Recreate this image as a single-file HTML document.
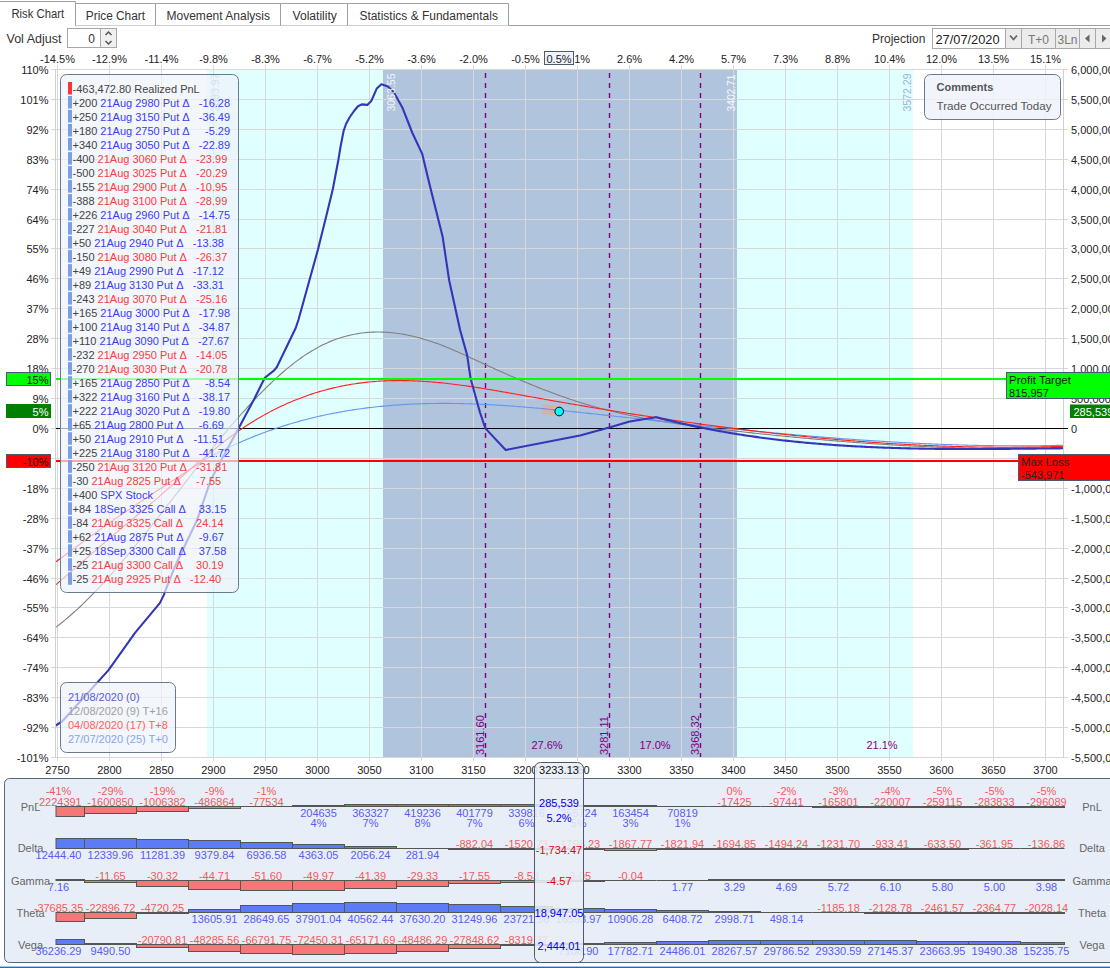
<!DOCTYPE html><html><head><meta charset="utf-8"><style>html,body{margin:0;padding:0;background:#fff;overflow:hidden}svg{display:block}text{font-family:"Liberation Sans",sans-serif}</style></head><body>
<svg width="1110" height="968" viewBox="0 0 1110 968">
<defs>
<clipPath id="plot"><rect x="56" y="69" width="1007" height="689"/></clipPath>
<clipPath id="above"><rect x="56" y="69" width="1007" height="392"/></clipPath>
<clipPath id="below"><rect x="56" y="461" width="1007" height="297"/></clipPath>
<clipPath id="panel"><rect x="0" y="770" width="1110" height="198"/></clipPath>
</defs>
<rect width="1110" height="968" fill="#fff"/>
<path d="M0 25.5 H1110" stroke="#a0a0a0" stroke-width="1"/>
<path d="M0 1.5 H75.5 V26" fill="#fff" stroke="#a0a0a0"/>
<rect x="0" y="2" width="75.0" height="24" fill="#fff"/>
<text x="11.40" y="18.00" font-size="12" fill="#333" textLength="52.7" lengthAdjust="spacingAndGlyphs" >Risk Chart</text>
<path d="M75.5 25.5 V3.5 H155.5 V25.5" fill="#fff" stroke="#a0a0a0"/>
<text x="85.80" y="19.60" font-size="12" fill="#333" textLength="59.2" lengthAdjust="spacingAndGlyphs" >Price Chart</text>
<path d="M155.5 25.5 V3.5 H280.5 V25.5" fill="#fff" stroke="#a0a0a0"/>
<text x="166.50" y="19.60" font-size="12" fill="#333" textLength="103.5" lengthAdjust="spacingAndGlyphs" >Movement Analysis</text>
<path d="M280.5 25.5 V3.5 H347.5 V25.5" fill="#fff" stroke="#a0a0a0"/>
<text x="292.50" y="19.60" font-size="12" fill="#333" textLength="44.4" lengthAdjust="spacingAndGlyphs" >Volatility</text>
<path d="M347.5 25.5 V3.5 H508.5 V25.5" fill="#fff" stroke="#a0a0a0"/>
<text x="359.40" y="19.60" font-size="12" fill="#333" textLength="138.5" lengthAdjust="spacingAndGlyphs" >Statistics &amp; Fundamentals</text>
<text x="6.50" y="43.00" font-size="12" fill="#333" textLength="55" lengthAdjust="spacingAndGlyphs" >Vol Adjust</text>
<rect x="67.5" y="28.5" width="49" height="19" fill="#fff" stroke="#a8a8a8"/>
<rect x="100.5" y="28.5" width="16" height="19" fill="#f0f0f0" stroke="#a8a8a8"/>
<path d="M105.5 35 L108.5 32 L111.5 35" fill="none" stroke="#555" stroke-width="1.5"/>
<path d="M105.5 41 L108.5 44 L111.5 41" fill="none" stroke="#555" stroke-width="1.5"/>
<text x="95.00" y="43.00" font-size="12" fill="#333" text-anchor="end" >0</text>
<text x="872.00" y="43.00" font-size="12" fill="#333" >Projection</text>
<rect x="932.5" y="28.5" width="177" height="20" fill="#fff" stroke="#a8a8a8"/>
<rect x="1005.5" y="28.5" width="16" height="20" fill="#ececec" stroke="#a8a8a8"/>
<path d="M1010 35.5 L1013.5 39.5 L1017 35.5" fill="none" stroke="#666" stroke-width="1.8"/>
<rect x="1021.5" y="28.5" width="34" height="20" fill="#ececec" stroke="#a8a8a8"/>
<rect x="1055.5" y="28.5" width="24" height="20" fill="#ececec" stroke="#a8a8a8"/>
<rect x="1079.5" y="28.5" width="16" height="20" fill="#ececec" stroke="#a8a8a8"/>
<rect x="1095.5" y="28.5" width="16" height="20" fill="#ececec" stroke="#a8a8a8"/>
<path d="M1089.5 34.5 L1085 38.5 L1089.5 42.5 Z" fill="#666"/>
<path d="M1102 34.5 L1106.5 38.5 L1102 42.5 Z" fill="#666"/>
<text x="935.50" y="44.00" font-size="12" fill="#222" textLength="64" lengthAdjust="spacingAndGlyphs" >27/07/2020</text>
<text x="1038.50" y="43.50" font-size="12" fill="#777" text-anchor="middle" >T+0</text>
<text x="1067.50" y="43.50" font-size="12" fill="#777" text-anchor="middle" >3Ln</text>
<rect x="207" y="70" width="706" height="687.5" fill="#e0ffff"/>
<rect x="383" y="70" width="354" height="687.5" fill="#b0c4de"/>
<path d="M57.5 65 V761 M109.5 65 V761 M161.5 65 V761 M213.5 65 V761 M265.5 65 V761 M317.5 65 V761 M369.5 65 V761 M421.5 65 V761 M473.5 65 V761 M525.5 65 V761 M577.5 65 V761 M629.5 65 V761 M681.5 65 V761 M733.5 65 V761 M785.5 65 V761 M837.5 65 V761 M889.5 65 V761 M941.5 65 V761 M993.5 65 V761 M1045.5 65 V761 M51 69.5 H1068 M51 99.5 H1068 M51 129.5 H1068 M51 159.5 H1068 M51 189.5 H1068 M51 219.5 H1068 M51 248.5 H1068 M51 278.5 H1068 M51 308.5 H1068 M51 338.5 H1068 M51 368.5 H1068 M51 398.5 H1068 M51 428.5 H1068 M51 458.5 H1068 M51 488.5 H1068 M51 518.5 H1068 M51 548.5 H1068 M51 578.5 H1068 M51 607.5 H1068 M51 637.5 H1068 M51 667.5 H1068 M51 697.5 H1068 M51 727.5 H1068 M51 757.5 H1068" stroke="#d8d8d8" stroke-width="1" fill="none"/>
<path d="M55.5 69 V758 M1063.5 69 V758" stroke="#d0d0d0" stroke-width="1"/>
<text x="57.50" y="62.50" font-size="11" fill="#222" text-anchor="middle" >-14.5%</text>
<text x="109.50" y="62.50" font-size="11" fill="#222" text-anchor="middle" >-12.9%</text>
<text x="161.50" y="62.50" font-size="11" fill="#222" text-anchor="middle" >-11.4%</text>
<text x="213.50" y="62.50" font-size="11" fill="#222" text-anchor="middle" >-9.8%</text>
<text x="265.50" y="62.50" font-size="11" fill="#222" text-anchor="middle" >-8.3%</text>
<text x="317.50" y="62.50" font-size="11" fill="#222" text-anchor="middle" >-6.7%</text>
<text x="369.50" y="62.50" font-size="11" fill="#222" text-anchor="middle" >-5.2%</text>
<text x="421.50" y="62.50" font-size="11" fill="#222" text-anchor="middle" >-3.6%</text>
<text x="473.50" y="62.50" font-size="11" fill="#222" text-anchor="middle" >-2.0%</text>
<text x="525.50" y="62.50" font-size="11" fill="#222" text-anchor="middle" >-0.5%</text>
<text x="577.50" y="62.50" font-size="11" fill="#222" text-anchor="middle" >1.1%</text>
<text x="629.50" y="62.50" font-size="11" fill="#222" text-anchor="middle" >2.6%</text>
<text x="681.50" y="62.50" font-size="11" fill="#222" text-anchor="middle" >4.2%</text>
<text x="733.50" y="62.50" font-size="11" fill="#222" text-anchor="middle" >5.7%</text>
<text x="785.50" y="62.50" font-size="11" fill="#222" text-anchor="middle" >7.3%</text>
<text x="837.50" y="62.50" font-size="11" fill="#222" text-anchor="middle" >8.8%</text>
<text x="889.50" y="62.50" font-size="11" fill="#222" text-anchor="middle" >10.4%</text>
<text x="941.50" y="62.50" font-size="11" fill="#222" text-anchor="middle" >12.0%</text>
<text x="993.50" y="62.50" font-size="11" fill="#222" text-anchor="middle" >13.5%</text>
<text x="1045.50" y="62.50" font-size="11" fill="#222" text-anchor="middle" >15.1%</text>
<text x="57.50" y="774.00" font-size="11" fill="#222" text-anchor="middle" >2750</text>
<text x="109.50" y="774.00" font-size="11" fill="#222" text-anchor="middle" >2800</text>
<text x="161.50" y="774.00" font-size="11" fill="#222" text-anchor="middle" >2850</text>
<text x="213.50" y="774.00" font-size="11" fill="#222" text-anchor="middle" >2900</text>
<text x="265.50" y="774.00" font-size="11" fill="#222" text-anchor="middle" >2950</text>
<text x="317.50" y="774.00" font-size="11" fill="#222" text-anchor="middle" >3000</text>
<text x="369.50" y="774.00" font-size="11" fill="#222" text-anchor="middle" >3050</text>
<text x="421.50" y="774.00" font-size="11" fill="#222" text-anchor="middle" >3100</text>
<text x="473.50" y="774.00" font-size="11" fill="#222" text-anchor="middle" >3150</text>
<text x="525.50" y="774.00" font-size="11" fill="#222" text-anchor="middle" >3200</text>
<text x="577.50" y="774.00" font-size="11" fill="#222" text-anchor="middle" >3250</text>
<text x="629.50" y="774.00" font-size="11" fill="#222" text-anchor="middle" >3300</text>
<text x="681.50" y="774.00" font-size="11" fill="#222" text-anchor="middle" >3350</text>
<text x="733.50" y="774.00" font-size="11" fill="#222" text-anchor="middle" >3400</text>
<text x="785.50" y="774.00" font-size="11" fill="#222" text-anchor="middle" >3450</text>
<text x="837.50" y="774.00" font-size="11" fill="#222" text-anchor="middle" >3500</text>
<text x="889.50" y="774.00" font-size="11" fill="#222" text-anchor="middle" >3550</text>
<text x="941.50" y="774.00" font-size="11" fill="#222" text-anchor="middle" >3600</text>
<text x="993.50" y="774.00" font-size="11" fill="#222" text-anchor="middle" >3650</text>
<text x="1045.50" y="774.00" font-size="11" fill="#222" text-anchor="middle" >3700</text>
<text x="48.50" y="73.50" font-size="11" fill="#222" text-anchor="end" >110%</text>
<text x="48.50" y="103.50" font-size="11" fill="#222" text-anchor="end" >101%</text>
<text x="48.50" y="133.50" font-size="11" fill="#222" text-anchor="end" >92%</text>
<text x="48.50" y="163.50" font-size="11" fill="#222" text-anchor="end" >83%</text>
<text x="48.50" y="193.50" font-size="11" fill="#222" text-anchor="end" >74%</text>
<text x="48.50" y="223.50" font-size="11" fill="#222" text-anchor="end" >64%</text>
<text x="48.50" y="252.50" font-size="11" fill="#222" text-anchor="end" >55%</text>
<text x="48.50" y="282.50" font-size="11" fill="#222" text-anchor="end" >46%</text>
<text x="48.50" y="312.50" font-size="11" fill="#222" text-anchor="end" >37%</text>
<text x="48.50" y="342.50" font-size="11" fill="#222" text-anchor="end" >28%</text>
<text x="48.50" y="372.50" font-size="11" fill="#222" text-anchor="end" >18%</text>
<text x="48.50" y="402.50" font-size="11" fill="#222" text-anchor="end" >9%</text>
<text x="48.50" y="432.50" font-size="11" fill="#222" text-anchor="end" >0%</text>
<text x="48.50" y="462.50" font-size="11" fill="#222" text-anchor="end" >-9%</text>
<text x="48.50" y="492.50" font-size="11" fill="#222" text-anchor="end" >-18%</text>
<text x="48.50" y="522.50" font-size="11" fill="#222" text-anchor="end" >-28%</text>
<text x="48.50" y="552.50" font-size="11" fill="#222" text-anchor="end" >-37%</text>
<text x="48.50" y="582.50" font-size="11" fill="#222" text-anchor="end" >-46%</text>
<text x="48.50" y="611.50" font-size="11" fill="#222" text-anchor="end" >-55%</text>
<text x="48.50" y="641.50" font-size="11" fill="#222" text-anchor="end" >-64%</text>
<text x="48.50" y="671.50" font-size="11" fill="#222" text-anchor="end" >-74%</text>
<text x="48.50" y="701.50" font-size="11" fill="#222" text-anchor="end" >-83%</text>
<text x="48.50" y="731.50" font-size="11" fill="#222" text-anchor="end" >-92%</text>
<text x="48.50" y="761.50" font-size="11" fill="#222" text-anchor="end" >-101%</text>
<text x="1071.00" y="73.50" font-size="11" fill="#222" >6,000,000</text>
<text x="1071.00" y="103.50" font-size="11" fill="#222" >5,500,000</text>
<text x="1071.00" y="133.50" font-size="11" fill="#222" >5,000,000</text>
<text x="1071.00" y="163.50" font-size="11" fill="#222" >4,500,000</text>
<text x="1071.00" y="193.50" font-size="11" fill="#222" >4,000,000</text>
<text x="1071.00" y="223.50" font-size="11" fill="#222" >3,500,000</text>
<text x="1071.00" y="252.50" font-size="11" fill="#222" >3,000,000</text>
<text x="1071.00" y="282.50" font-size="11" fill="#222" >2,500,000</text>
<text x="1071.00" y="312.50" font-size="11" fill="#222" >2,000,000</text>
<text x="1071.00" y="342.50" font-size="11" fill="#222" >1,500,000</text>
<text x="1071.00" y="372.50" font-size="11" fill="#222" >1,000,000</text>
<text x="1071.00" y="402.50" font-size="11" fill="#222" >500,000</text>
<text x="1071.00" y="432.50" font-size="11" fill="#222" >0</text>
<text x="1071.00" y="462.50" font-size="11" fill="#222" >-500,000</text>
<text x="1071.00" y="492.50" font-size="11" fill="#222" >-1,000,000</text>
<text x="1071.00" y="522.50" font-size="11" fill="#222" >-1,500,000</text>
<text x="1071.00" y="552.50" font-size="11" fill="#222" >-2,000,000</text>
<text x="1071.00" y="582.50" font-size="11" fill="#222" >-2,500,000</text>
<text x="1071.00" y="611.50" font-size="11" fill="#222" >-3,000,000</text>
<text x="1071.00" y="641.50" font-size="11" fill="#222" >-3,500,000</text>
<text x="1071.00" y="671.50" font-size="11" fill="#222" >-4,000,000</text>
<text x="1071.00" y="701.50" font-size="11" fill="#222" >-4,500,000</text>
<text x="1071.00" y="731.50" font-size="11" fill="#222" >-5,000,000</text>
<text x="1071.00" y="761.50" font-size="11" fill="#222" >-5,500,000</text>
<path d="M485.5 73 V757" stroke="#800080" stroke-width="1.4" stroke-dasharray="5,5"/>
<text x="0" y="0" font-size="11" fill="#800080" transform="translate(483.5,755) rotate(-90)">3161.60</text>
<path d="M609.5 73 V757" stroke="#800080" stroke-width="1.4" stroke-dasharray="5,5"/>
<text x="0" y="0" font-size="11" fill="#800080" transform="translate(607.5,755) rotate(-90)">3281.11</text>
<path d="M700.5 73 V757" stroke="#800080" stroke-width="1.4" stroke-dasharray="5,5"/>
<text x="0" y="0" font-size="11" fill="#800080" transform="translate(698.5,755) rotate(-90)">3368.32</text>
<text x="547.00" y="749.00" font-size="11" fill="#800080" text-anchor="middle" >27.6%</text>
<text x="655.00" y="749.00" font-size="11" fill="#800080" text-anchor="middle" >17.0%</text>
<text x="882.00" y="749.00" font-size="11" fill="#800080" text-anchor="middle" >21.1%</text>
<path d="M56 428.5 H1068" stroke="#000" stroke-width="1"/>
<path d="M542.5 409 L558 411.3" stroke="#dcb09a" stroke-width="10" opacity="0.85"/>
<g clip-path="url(#plot)" fill="none" stroke-linejoin="round">
<path d="M56.0 627.11 L58.0 625.59 L60.0 624.04 L62.0 622.45 L64.0 620.83 L66.0 619.18 L68.0 617.49 L70.0 615.78 L72.0 614.03 L74.0 612.25 L76.0 610.44 L78.0 608.60 L80.0 606.73 L82.0 604.83 L84.0 602.91 L86.0 600.95 L88.0 598.97 L90.0 596.97 L92.0 594.94 L94.0 592.88 L96.0 590.80 L98.0 588.70 L100.0 586.57 L102.0 584.42 L104.0 582.25 L106.0 580.06 L108.0 577.84 L110.0 575.61 L112.0 573.36 L114.0 571.09 L116.0 568.79 L118.0 566.49 L120.0 564.16 L122.0 561.82 L124.0 559.46 L126.0 557.09 L128.0 554.70 L130.0 552.29 L132.0 549.88 L134.0 547.45 L136.0 545.01 L138.0 542.55 L140.0 540.09 L142.0 537.61 L144.0 535.13 L146.0 532.63 L148.0 530.13 L150.0 527.61 L152.0 525.09 L154.0 522.56 L156.0 520.03 L158.0 517.49 L160.0 514.94 L162.0 512.39 L164.0 509.84 L166.0 507.28 L168.0 504.72 L170.0 502.16 L172.0 499.59 L174.0 497.02 L176.0 494.46 L178.0 491.89 L180.0 489.32 L182.0 486.76 L184.0 484.19 L186.0 481.63 L188.0 479.07 L190.0 476.52 L192.0 473.97 L194.0 471.42 L196.0 468.88 L198.0 466.34 L200.0 463.81 L202.0 461.29 L204.0 458.78 L206.0 456.27 L208.0 453.77 L210.0 451.29 L212.0 448.81 L214.0 446.34 L216.0 443.89 L218.0 441.44 L220.0 439.01 L222.0 436.59 L224.0 434.19 L226.0 431.80 L228.0 429.42 L230.0 427.06 L232.0 424.71 L234.0 422.39 L236.0 420.08 L238.0 417.78 L240.0 415.51 L242.0 413.25 L244.0 411.01 L246.0 408.80 L248.0 406.60 L250.0 404.43 L252.0 402.27 L254.0 400.14 L256.0 398.04 L258.0 395.95 L260.0 393.89 L262.0 391.86 L264.0 389.85 L266.0 387.86 L268.0 385.91 L270.0 383.98 L272.0 382.08 L274.0 380.20 L276.0 378.36 L278.0 376.54 L280.0 374.76 L282.0 373.01 L284.0 371.28 L286.0 369.59 L288.0 367.93 L290.0 366.31 L292.0 364.72 L294.0 363.16 L296.0 361.64 L298.0 360.15 L300.0 358.70 L302.0 357.29 L304.0 355.91 L306.0 354.57 L308.0 353.27 L310.0 352.01 L312.0 350.79 L314.0 349.61 L316.0 348.46 L318.0 347.37 L320.0 346.31 L322.0 345.29 L324.0 344.32 L326.0 343.38 L328.0 342.48 L330.0 341.63 L332.0 340.81 L334.0 340.04 L336.0 339.30 L338.0 338.60 L340.0 337.93 L342.0 337.31 L344.0 336.72 L346.0 336.17 L348.0 335.65 L350.0 335.17 L352.0 334.73 L354.0 334.32 L356.0 333.95 L358.0 333.61 L360.0 333.30 L362.0 333.03 L364.0 332.79 L366.0 332.59 L368.0 332.41 L370.0 332.27 L372.0 332.16 L374.0 332.08 L376.0 332.04 L378.0 332.02 L380.0 332.03 L382.0 332.08 L384.0 332.15 L386.0 332.25 L388.0 332.38 L390.0 332.54 L392.0 332.73 L394.0 332.94 L396.0 333.18 L398.0 333.45 L400.0 333.74 L402.0 334.06 L404.0 334.41 L406.0 334.78 L408.0 335.18 L410.0 335.60 L412.0 336.04 L414.0 336.51 L416.0 337.01 L418.0 337.52 L420.0 338.06 L422.0 338.62 L424.0 339.20 L426.0 339.80 L428.0 340.43 L430.0 341.07 L432.0 341.74 L434.0 342.42 L436.0 343.13 L438.0 343.85 L440.0 344.59 L442.0 345.36 L444.0 346.13 L446.0 346.93 L448.0 347.74 L450.0 348.57 L452.0 349.42 L454.0 350.27 L456.0 351.14 L458.0 352.02 L460.0 352.91 L462.0 353.80 L464.0 354.71 L466.0 355.62 L468.0 356.54 L470.0 357.46 L472.0 358.38 L474.0 359.31 L476.0 360.24 L478.0 361.17 L480.0 362.09 L482.0 363.02 L484.0 363.94 L486.0 364.86 L488.0 365.77 L490.0 366.69 L492.0 367.60 L494.0 368.50 L496.0 369.41 L498.0 370.31 L500.0 371.21 L502.0 372.10 L504.0 372.99 L506.0 373.87 L508.0 374.76 L510.0 375.63 L512.0 376.50 L514.0 377.37 L516.0 378.23 L518.0 379.09 L520.0 379.95 L522.0 380.79 L524.0 381.63 L526.0 382.47 L528.0 383.30 L530.0 384.13 L532.0 384.95 L534.0 385.76 L536.0 386.57 L538.0 387.37 L540.0 388.16 L542.0 388.95 L544.0 389.73 L546.0 390.50 L548.0 391.27 L550.0 392.03 L552.0 392.78 L554.0 393.52 L556.0 394.26 L558.0 394.99 L560.0 395.71 L562.0 396.42 L564.0 397.12 L566.0 397.82 L568.0 398.51 L570.0 399.18 L572.0 399.85 L574.0 400.51 L576.0 401.16 L578.0 401.81 L580.0 402.44 L582.0 403.06 L584.0 403.67 L586.0 404.28 L588.0 404.87 L590.0 405.46 L592.0 406.03 L594.0 406.60 L596.0 407.16 L598.0 407.71 L600.0 408.25 L602.0 408.78 L604.0 409.30 L606.0 409.82 L608.0 410.33 L610.0 410.83 L612.0 411.32 L614.0 411.80 L616.0 412.28 L618.0 412.75 L620.0 413.21 L622.0 413.66 L624.0 414.11 L626.0 414.55 L628.0 414.98 L630.0 415.41 L632.0 415.83 L634.0 416.24 L636.0 416.65 L638.0 417.05 L640.0 417.44 L642.0 417.83 L644.0 418.21 L646.0 418.58 L648.0 418.95 L650.0 419.31 L652.0 419.67 L654.0 420.02 L656.0 420.37 L658.0 420.71 L660.0 421.05 L662.0 421.38 L664.0 421.70 L666.0 422.03 L668.0 422.34 L670.0 422.65 L672.0 422.96 L674.0 423.26 L676.0 423.56 L678.0 423.86 L680.0 424.15 L682.0 424.44 L684.0 424.72 L686.0 425.00 L688.0 425.27 L690.0 425.55 L692.0 425.81 L694.0 426.08 L696.0 426.34 L698.0 426.60 L700.0 426.86 L702.0 427.11 L704.0 427.36 L706.0 427.61 L708.0 427.86 L710.0 428.10 L712.0 428.34 L714.0 428.58 L716.0 428.82 L718.0 429.06 L720.0 429.29 L722.0 429.52 L724.0 429.76 L726.0 429.98 L728.0 430.21 L730.0 430.44 L732.0 430.67 L734.0 430.89 L736.0 431.11 L738.0 431.34 L740.0 431.56 L742.0 431.78 L744.0 432.00 L746.0 432.22 L748.0 432.44 L750.0 432.66 L752.0 432.87 L754.0 433.09 L756.0 433.30 L758.0 433.52 L760.0 433.73 L762.0 433.94 L764.0 434.15 L766.0 434.36 L768.0 434.57 L770.0 434.78 L772.0 434.98 L774.0 435.19 L776.0 435.39 L778.0 435.59 L780.0 435.79 L782.0 435.99 L784.0 436.19 L786.0 436.39 L788.0 436.59 L790.0 436.78 L792.0 436.98 L794.0 437.17 L796.0 437.36 L798.0 437.55 L800.0 437.74 L802.0 437.93 L804.0 438.12 L806.0 438.30 L808.0 438.49 L810.0 438.67 L812.0 438.85 L814.0 439.03 L816.0 439.21 L818.0 439.39 L820.0 439.57 L822.0 439.74 L824.0 439.91 L826.0 440.09 L828.0 440.26 L830.0 440.43 L832.0 440.59 L834.0 440.76 L836.0 440.92 L838.0 441.09 L840.0 441.25 L842.0 441.41 L844.0 441.57 L846.0 441.73 L848.0 441.88 L850.0 442.04 L852.0 442.19 L854.0 442.34 L856.0 442.49 L858.0 442.64 L860.0 442.78 L862.0 442.93 L864.0 443.07 L866.0 443.21 L868.0 443.35 L870.0 443.49 L872.0 443.63 L874.0 443.76 L876.0 443.90 L878.0 444.03 L880.0 444.16 L882.0 444.28 L884.0 444.41 L886.0 444.54 L888.0 444.66 L890.0 444.78 L892.0 444.90 L894.0 445.02 L896.0 445.13 L898.0 445.25 L900.0 445.36 L902.0 445.47 L904.0 445.58 L906.0 445.68 L908.0 445.79 L910.0 445.89 L912.0 445.99 L914.0 446.09 L916.0 446.19 L918.0 446.28 L920.0 446.38 L922.0 446.47 L924.0 446.56 L926.0 446.64 L928.0 446.73 L930.0 446.81 L932.0 446.89 L934.0 446.97 L936.0 447.05 L938.0 447.12 L940.0 447.20 L942.0 447.27 L944.0 447.34 L946.0 447.41 L948.0 447.47 L950.0 447.53 L952.0 447.59 L954.0 447.65 L956.0 447.71 L958.0 447.76 L960.0 447.81 L962.0 447.86 L964.0 447.91 L966.0 447.96 L968.0 448.00 L970.0 448.04 L972.0 448.08 L974.0 448.12 L976.0 448.15 L978.0 448.18 L980.0 448.21 L982.0 448.24 L984.0 448.27 L986.0 448.29 L988.0 448.31 L990.0 448.33 L992.0 448.34 L994.0 448.36 L996.0 448.37 L998.0 448.38 L1000.0 448.39 L1002.0 448.39 L1004.0 448.39 L1006.0 448.39 L1008.0 448.39 L1010.0 448.38 L1012.0 448.37 L1014.0 448.36 L1016.0 448.35 L1018.0 448.33 L1020.0 448.32 L1022.0 448.30 L1024.0 448.27 L1026.0 448.25 L1028.0 448.22 L1030.0 448.19 L1032.0 448.15 L1034.0 448.12 L1036.0 448.08 L1038.0 448.04 L1040.0 448.00 L1042.0 447.95 L1044.0 447.90 L1046.0 447.85 L1048.0 447.79 L1050.0 447.74 L1052.0 447.68 L1054.0 447.62 L1056.0 447.55 L1058.0 447.48 L1060.0 447.41 L1062.0 447.34 L1063.0 447.30" stroke="#808080" stroke-width="1.1"/>
<path d="M56.0 561.8 L108.7 523.1 L156.0 491.5 L203.0 461.0" stroke="#ff2020" stroke-width="1.1"/>
<path d="M203.0 460.61 L205.0 459.51 L207.0 458.43 L209.0 457.35 L211.0 456.29 L213.0 455.24 L215.0 454.21 L217.0 453.19 L219.0 452.18 L221.0 451.18 L223.0 450.19 L225.0 449.22 L227.0 448.26 L229.0 447.31 L231.0 446.38 L233.0 445.45 L235.0 444.54 L237.0 443.64 L239.0 442.76 L241.0 441.88 L243.0 441.02 L245.0 440.17 L247.0 439.32 L249.0 438.50 L251.0 437.68 L253.0 436.87 L255.0 436.08 L257.0 435.30 L259.0 434.53 L261.0 433.77 L263.0 433.02 L265.0 432.28 L267.0 431.55 L269.0 430.84 L271.0 430.13 L273.0 429.44 L275.0 428.76 L277.0 428.08 L279.0 427.42 L281.0 426.77 L283.0 426.13 L285.0 425.50 L287.0 424.88 L289.0 424.27 L291.0 423.67 L293.0 423.08 L295.0 422.51 L297.0 421.94 L299.0 421.38 L301.0 420.83 L303.0 420.29 L305.0 419.76 L307.0 419.25 L309.0 418.74 L311.0 418.24 L313.0 417.75 L315.0 417.27 L317.0 416.80 L319.0 416.33 L321.0 415.88 L323.0 415.44 L325.0 415.01 L327.0 414.58 L329.0 414.17 L331.0 413.76 L333.0 413.36 L335.0 412.97 L337.0 412.59 L339.0 412.22 L341.0 411.86 L343.0 411.51 L345.0 411.16 L347.0 410.83 L349.0 410.50 L351.0 410.18 L353.0 409.87 L355.0 409.56 L357.0 409.27 L359.0 408.98 L361.0 408.70 L363.0 408.43 L365.0 408.17 L367.0 407.91 L369.0 407.67 L371.0 407.43 L373.0 407.19 L375.0 406.97 L377.0 406.75 L379.0 406.54 L381.0 406.34 L383.0 406.15 L385.0 405.96 L387.0 405.78 L389.0 405.61 L391.0 405.44 L393.0 405.28 L395.0 405.13 L397.0 404.98 L399.0 404.85 L401.0 404.71 L403.0 404.59 L405.0 404.47 L407.0 404.36 L409.0 404.26 L411.0 404.16 L413.0 404.06 L415.0 403.98 L417.0 403.90 L419.0 403.83 L421.0 403.76 L423.0 403.70 L425.0 403.64 L427.0 403.59 L429.0 403.55 L431.0 403.51 L433.0 403.48 L435.0 403.45 L437.0 403.43 L439.0 403.42 L441.0 403.41 L443.0 403.40 L445.0 403.40 L447.0 403.41 L449.0 403.42 L451.0 403.44 L453.0 403.46 L455.0 403.49 L457.0 403.52 L459.0 403.56 L461.0 403.60 L463.0 403.64 L465.0 403.69 L467.0 403.75 L469.0 403.81 L471.0 403.88 L473.0 403.94 L475.0 404.02 L477.0 404.10 L479.0 404.18 L481.0 404.26 L483.0 404.36 L485.0 404.45 L487.0 404.55 L489.0 404.65 L491.0 404.76 L493.0 404.87 L495.0 404.98 L497.0 405.10 L499.0 405.22 L501.0 405.34 L503.0 405.47 L505.0 405.60 L507.0 405.74 L509.0 405.88 L511.0 406.02 L513.0 406.16 L515.0 406.31 L517.0 406.46 L519.0 406.62 L521.0 406.77 L523.0 406.93 L525.0 407.10 L527.0 407.26 L529.0 407.43 L531.0 407.60 L533.0 407.77 L535.0 407.95 L537.0 408.12 L539.0 408.30 L541.0 408.49 L543.0 408.67 L545.0 408.86 L547.0 409.05 L549.0 409.24 L551.0 409.43 L553.0 409.62 L555.0 409.82 L557.0 410.02 L559.0 410.22 L561.0 410.42 L563.0 410.62 L565.0 410.83 L567.0 411.03 L569.0 411.24 L571.0 411.45 L573.0 411.66 L575.0 411.87 L577.0 412.08 L579.0 412.29 L581.0 412.51 L583.0 412.72 L585.0 412.94 L587.0 413.16 L589.0 413.37 L591.0 413.59 L593.0 413.81 L595.0 414.03 L597.0 414.25 L599.0 414.47 L601.0 414.69 L603.0 414.91 L605.0 415.13 L607.0 415.35 L609.0 415.57 L611.0 415.79 L613.0 416.01 L615.0 416.24 L617.0 416.46 L619.0 416.68 L621.0 416.90 L623.0 417.12 L625.0 417.34 L627.0 417.56 L629.0 417.78 L631.0 418.00 L633.0 418.22 L635.0 418.44 L637.0 418.66 L639.0 418.88 L641.0 419.10 L643.0 419.32 L645.0 419.54 L647.0 419.76 L649.0 419.98 L651.0 420.20 L653.0 420.42 L655.0 420.64 L657.0 420.86 L659.0 421.08 L661.0 421.29 L663.0 421.51 L665.0 421.73 L667.0 421.95 L669.0 422.16 L671.0 422.38 L673.0 422.60 L675.0 422.81 L677.0 423.03 L679.0 423.24 L681.0 423.46 L683.0 423.67 L685.0 423.89 L687.0 424.10 L689.0 424.31 L691.0 424.53 L693.0 424.74 L695.0 424.95 L697.0 425.16 L699.0 425.37 L701.0 425.58 L703.0 425.79 L705.0 426.00 L707.0 426.21 L709.0 426.42 L711.0 426.63 L713.0 426.84 L715.0 427.04 L717.0 427.25 L719.0 427.46 L721.0 427.66 L723.0 427.87 L725.0 428.07 L727.0 428.28 L729.0 428.48 L731.0 428.68 L733.0 428.88 L735.0 429.08 L737.0 429.28 L739.0 429.48 L741.0 429.68 L743.0 429.88 L745.0 430.08 L747.0 430.28 L749.0 430.47 L751.0 430.67 L753.0 430.86 L755.0 431.06 L757.0 431.25 L759.0 431.44 L761.0 431.63 L763.0 431.83 L765.0 432.02 L767.0 432.20 L769.0 432.39 L771.0 432.58 L773.0 432.77 L775.0 432.95 L777.0 433.14 L779.0 433.32 L781.0 433.51 L783.0 433.69 L785.0 433.87 L787.0 434.05 L789.0 434.23 L791.0 434.41 L793.0 434.59 L795.0 434.76 L797.0 434.94 L799.0 435.11 L801.0 435.29 L803.0 435.46 L805.0 435.63 L807.0 435.80 L809.0 435.97 L811.0 436.14 L813.0 436.31 L815.0 436.47 L817.0 436.64 L819.0 436.80 L821.0 436.97 L823.0 437.13 L825.0 437.29 L827.0 437.45 L829.0 437.61 L831.0 437.76 L833.0 437.92 L835.0 438.08 L837.0 438.23 L839.0 438.38 L841.0 438.53 L843.0 438.68 L845.0 438.83 L847.0 438.98 L849.0 439.13 L851.0 439.27 L853.0 439.42 L855.0 439.56 L857.0 439.70 L859.0 439.84 L861.0 439.98 L863.0 440.12 L865.0 440.25 L867.0 440.39 L869.0 440.52 L871.0 440.65 L873.0 440.78 L875.0 440.91 L877.0 441.04 L879.0 441.17 L881.0 441.29 L883.0 441.41 L885.0 441.54 L887.0 441.66 L889.0 441.77 L891.0 441.89 L893.0 442.01 L895.0 442.12 L897.0 442.24 L899.0 442.35 L901.0 442.46 L903.0 442.57 L905.0 442.67 L907.0 442.78 L909.0 442.88 L911.0 442.98 L913.0 443.08 L915.0 443.18 L917.0 443.28 L919.0 443.38 L921.0 443.47 L923.0 443.56 L925.0 443.65 L927.0 443.74 L929.0 443.83 L931.0 443.91 L933.0 444.00 L935.0 444.08 L937.0 444.16 L939.0 444.24 L941.0 444.32 L943.0 444.39 L945.0 444.46 L947.0 444.54 L949.0 444.61 L951.0 444.67 L953.0 444.74 L955.0 444.80 L957.0 444.87 L959.0 444.93 L961.0 444.99 L963.0 445.04 L965.0 445.10 L967.0 445.15 L969.0 445.20 L971.0 445.25 L973.0 445.30 L975.0 445.34 L977.0 445.39 L979.0 445.43 L981.0 445.47 L983.0 445.51 L985.0 445.54 L987.0 445.58 L989.0 445.61 L991.0 445.64 L993.0 445.66 L995.0 445.69 L997.0 445.71 L999.0 445.74 L1001.0 445.75 L1003.0 445.77 L1005.0 445.79 L1007.0 445.80 L1009.0 445.81 L1011.0 445.82 L1013.0 445.83 L1015.0 445.83 L1017.0 445.83 L1019.0 445.83 L1021.0 445.83 L1023.0 445.83 L1025.0 445.82 L1027.0 445.81 L1029.0 445.80 L1031.0 445.79 L1033.0 445.77 L1035.0 445.76 L1037.0 445.74 L1039.0 445.71 L1041.0 445.69 L1043.0 445.66 L1045.0 445.63 L1047.0 445.60 L1049.0 445.57 L1051.0 445.53 L1053.0 445.49 L1055.0 445.45 L1057.0 445.41 L1059.0 445.36 L1061.0 445.32 L1063.0 445.27" stroke="#6495ed" stroke-width="1.1"/>
<path d="M56.0 584.7 L108.7 539.0 L156.0 499.4 L199.5 461.0" stroke="#ff2020" stroke-width="1.1"/>
<path d="M199.5 462.44 L201.5 460.61 L203.5 458.81 L205.5 457.03 L207.5 455.27 L209.5 453.54 L211.5 451.84 L213.5 450.15 L215.5 448.49 L217.5 446.86 L219.5 445.24 L221.5 443.65 L223.5 442.08 L225.5 440.54 L227.5 439.02 L229.5 437.52 L231.5 436.04 L233.5 434.59 L235.5 433.16 L237.5 431.75 L239.5 430.36 L241.5 428.99 L243.5 427.65 L245.5 426.33 L247.5 425.03 L249.5 423.75 L251.5 422.49 L253.5 421.25 L255.5 420.04 L257.5 418.84 L259.5 417.67 L261.5 416.52 L263.5 415.38 L265.5 414.27 L267.5 413.18 L269.5 412.11 L271.5 411.06 L273.5 410.03 L275.5 409.02 L277.5 408.03 L279.5 407.06 L281.5 406.11 L283.5 405.18 L285.5 404.26 L287.5 403.37 L289.5 402.50 L291.5 401.64 L293.5 400.81 L295.5 399.99 L297.5 399.19 L299.5 398.41 L301.5 397.65 L303.5 396.91 L305.5 396.18 L307.5 395.48 L309.5 394.79 L311.5 394.12 L313.5 393.46 L315.5 392.83 L317.5 392.21 L319.5 391.61 L321.5 391.03 L323.5 390.46 L325.5 389.92 L327.5 389.38 L329.5 388.87 L331.5 388.37 L333.5 387.89 L335.5 387.43 L337.5 386.98 L339.5 386.55 L341.5 386.13 L343.5 385.73 L345.5 385.35 L347.5 384.98 L349.5 384.63 L351.5 384.29 L353.5 383.97 L355.5 383.67 L357.5 383.38 L359.5 383.10 L361.5 382.84 L363.5 382.60 L365.5 382.37 L367.5 382.15 L369.5 381.95 L371.5 381.76 L373.5 381.59 L375.5 381.43 L377.5 381.29 L379.5 381.16 L381.5 381.04 L383.5 380.93 L385.5 380.84 L387.5 380.77 L389.5 380.70 L391.5 380.65 L393.5 380.61 L395.5 380.58 L397.5 380.56 L399.5 380.56 L401.5 380.57 L403.5 380.59 L405.5 380.62 L407.5 380.66 L409.5 380.71 L411.5 380.77 L413.5 380.84 L415.5 380.93 L417.5 381.02 L419.5 381.13 L421.5 381.24 L423.5 381.36 L425.5 381.49 L427.5 381.64 L429.5 381.79 L431.5 381.94 L433.5 382.11 L435.5 382.29 L437.5 382.47 L439.5 382.66 L441.5 382.87 L443.5 383.07 L445.5 383.29 L447.5 383.51 L449.5 383.74 L451.5 383.98 L453.5 384.22 L455.5 384.47 L457.5 384.73 L459.5 384.99 L461.5 385.26 L463.5 385.53 L465.5 385.81 L467.5 386.10 L469.5 386.39 L471.5 386.68 L473.5 386.98 L475.5 387.29 L477.5 387.60 L479.5 387.91 L481.5 388.23 L483.5 388.55 L485.5 388.87 L487.5 389.20 L489.5 389.54 L491.5 389.87 L493.5 390.21 L495.5 390.55 L497.5 390.89 L499.5 391.24 L501.5 391.59 L503.5 391.94 L505.5 392.29 L507.5 392.64 L509.5 393.00 L511.5 393.35 L513.5 393.71 L515.5 394.07 L517.5 394.43 L519.5 394.79 L521.5 395.15 L523.5 395.51 L525.5 395.87 L527.5 396.23 L529.5 396.58 L531.5 396.94 L533.5 397.30 L535.5 397.66 L537.5 398.01 L539.5 398.37 L541.5 398.72 L543.5 399.08 L545.5 399.43 L547.5 399.78 L549.5 400.14 L551.5 400.49 L553.5 400.84 L555.5 401.19 L557.5 401.54 L559.5 401.88 L561.5 402.23 L563.5 402.58 L565.5 402.92 L567.5 403.27 L569.5 403.61 L571.5 403.96 L573.5 404.30 L575.5 404.64 L577.5 404.98 L579.5 405.32 L581.5 405.66 L583.5 406.00 L585.5 406.34 L587.5 406.67 L589.5 407.01 L591.5 407.34 L593.5 407.68 L595.5 408.01 L597.5 408.34 L599.5 408.67 L601.5 409.00 L603.5 409.33 L605.5 409.66 L607.5 409.99 L609.5 410.32 L611.5 410.64 L613.5 410.97 L615.5 411.29 L617.5 411.61 L619.5 411.93 L621.5 412.25 L623.5 412.57 L625.5 412.89 L627.5 413.21 L629.5 413.53 L631.5 413.84 L633.5 414.16 L635.5 414.47 L637.5 414.78 L639.5 415.09 L641.5 415.40 L643.5 415.71 L645.5 416.02 L647.5 416.33 L649.5 416.64 L651.5 416.94 L653.5 417.24 L655.5 417.55 L657.5 417.85 L659.5 418.15 L661.5 418.45 L663.5 418.75 L665.5 419.04 L667.5 419.34 L669.5 419.63 L671.5 419.93 L673.5 420.22 L675.5 420.51 L677.5 420.80 L679.5 421.09 L681.5 421.38 L683.5 421.67 L685.5 421.95 L687.5 422.24 L689.5 422.52 L691.5 422.80 L693.5 423.08 L695.5 423.36 L697.5 423.64 L699.5 423.91 L701.5 424.19 L703.5 424.46 L705.5 424.74 L707.5 425.01 L709.5 425.28 L711.5 425.55 L713.5 425.82 L715.5 426.08 L717.5 426.35 L719.5 426.61 L721.5 426.87 L723.5 427.13 L725.5 427.39 L727.5 427.65 L729.5 427.91 L731.5 428.17 L733.5 428.42 L735.5 428.67 L737.5 428.92 L739.5 429.17 L741.5 429.42 L743.5 429.67 L745.5 429.92 L747.5 430.16 L749.5 430.40 L751.5 430.64 L753.5 430.88 L755.5 431.12 L757.5 431.36 L759.5 431.60 L761.5 431.83 L763.5 432.06 L765.5 432.30 L767.5 432.52 L769.5 432.75 L771.5 432.98 L773.5 433.21 L775.5 433.43 L777.5 433.65 L779.5 433.87 L781.5 434.09 L783.5 434.31 L785.5 434.53 L787.5 434.74 L789.5 434.95 L791.5 435.16 L793.5 435.37 L795.5 435.58 L797.5 435.79 L799.5 435.99 L801.5 436.20 L803.5 436.40 L805.5 436.60 L807.5 436.80 L809.5 436.99 L811.5 437.19 L813.5 437.38 L815.5 437.58 L817.5 437.77 L819.5 437.95 L821.5 438.14 L823.5 438.33 L825.5 438.51 L827.5 438.69 L829.5 438.87 L831.5 439.05 L833.5 439.23 L835.5 439.40 L837.5 439.58 L839.5 439.75 L841.5 439.92 L843.5 440.09 L845.5 440.25 L847.5 440.42 L849.5 440.58 L851.5 440.74 L853.5 440.90 L855.5 441.06 L857.5 441.21 L859.5 441.37 L861.5 441.52 L863.5 441.67 L865.5 441.82 L867.5 441.96 L869.5 442.11 L871.5 442.25 L873.5 442.39 L875.5 442.53 L877.5 442.67 L879.5 442.80 L881.5 442.94 L883.5 443.07 L885.5 443.20 L887.5 443.33 L889.5 443.45 L891.5 443.57 L893.5 443.70 L895.5 443.82 L897.5 443.94 L899.5 444.05 L901.5 444.17 L903.5 444.28 L905.5 444.39 L907.5 444.50 L909.5 444.60 L911.5 444.71 L913.5 444.81 L915.5 444.91 L917.5 445.01 L919.5 445.10 L921.5 445.20 L923.5 445.29 L925.5 445.38 L927.5 445.47 L929.5 445.56 L931.5 445.64 L933.5 445.72 L935.5 445.80 L937.5 445.88 L939.5 445.95 L941.5 446.03 L943.5 446.10 L945.5 446.17 L947.5 446.24 L949.5 446.30 L951.5 446.37 L953.5 446.43 L955.5 446.49 L957.5 446.54 L959.5 446.60 L961.5 446.65 L963.5 446.70 L965.5 446.75 L967.5 446.79 L969.5 446.84 L971.5 446.88 L973.5 446.92 L975.5 446.95 L977.5 446.99 L979.5 447.02 L981.5 447.05 L983.5 447.08 L985.5 447.11 L987.5 447.13 L989.5 447.15 L991.5 447.17 L993.5 447.19 L995.5 447.20 L997.5 447.22 L999.5 447.23 L1001.5 447.23 L1003.5 447.24 L1005.5 447.24 L1007.5 447.24 L1009.5 447.24 L1011.5 447.24 L1013.5 447.23 L1015.5 447.22 L1017.5 447.21 L1019.5 447.20 L1021.5 447.18 L1023.5 447.16 L1025.5 447.14 L1027.5 447.12 L1029.5 447.10 L1031.5 447.07 L1033.5 447.04 L1035.5 447.01 L1037.5 446.97 L1039.5 446.93 L1041.5 446.90 L1043.5 446.85 L1045.5 446.81 L1047.5 446.76 L1049.5 446.71 L1051.5 446.66 L1053.5 446.61 L1055.5 446.55 L1057.5 446.49 L1059.5 446.43 L1061.5 446.36 L1063.0 446.31" stroke="#ff2020" stroke-width="1.1"/>
<path d="M55.7 725.5 L62.3 721.3 L108.5 670.1 L135.0 632.9 L159.8 603.1 L163.9 594.9 L165.0 591.5 L174.9 566.7 L184.8 545.7 L197.2 519.7 L210.8 480.0 L222.3 458.0 L238.5 428.6 L254.1 399.2 L264.8 377.7 L274.2 370.3 L276.9 367.0 L295.7 328.0 L298.4 320.0 L317.9 249.7 L325.3 220.0 L332.8 189.3 L338.5 159.2 L340.5 147.0 L343.6 131.0 L346.0 124.0 L349.5 117.5 L354.0 111.0 L358.0 106.3 L361.7 104.4 L367.3 104.9 L371.5 100.7 L376.7 88.6 L381.4 84.2 L387.9 86.4 L393.5 91.7 L402.2 107.2 L412.4 133.0 L422.1 153.6 L430.8 189.4 L442.7 237.1 L449.2 280.5 L460.1 330.0 L467.1 355.1 L470.6 378.5 L480.0 412.5 L485.4 428.4 L505.7 450.0 L580.0 435.5 L609.2 427.4 L629.7 421.5 L655.7 417.2 L655.7 417.07 L657.7 417.59 L659.7 418.11 L661.7 418.62 L663.7 419.12 L665.7 419.62 L667.7 420.11 L669.7 420.60 L671.7 421.08 L673.7 421.56 L675.7 422.03 L677.7 422.50 L679.7 422.96 L681.7 423.41 L683.7 423.87 L685.7 424.31 L687.7 424.75 L689.7 425.19 L691.7 425.62 L693.7 426.04 L695.7 426.46 L697.7 426.88 L699.7 427.29 L701.7 427.69 L703.7 428.09 L705.7 428.49 L707.7 428.88 L709.7 429.27 L711.7 429.65 L713.7 430.02 L715.7 430.39 L717.7 430.76 L719.7 431.12 L721.7 431.48 L723.7 431.83 L725.7 432.18 L727.7 432.53 L729.7 432.87 L731.7 433.20 L733.7 433.53 L735.7 433.86 L737.7 434.18 L739.7 434.49 L741.7 434.81 L743.7 435.12 L745.7 435.42 L747.7 435.72 L749.7 436.01 L751.7 436.31 L753.7 436.59 L755.7 436.88 L757.7 437.15 L759.7 437.43 L761.7 437.70 L763.7 437.97 L765.7 438.23 L767.7 438.49 L769.7 438.74 L771.7 438.99 L773.7 439.24 L775.7 439.48 L777.7 439.72 L779.7 439.96 L781.7 440.19 L783.7 440.42 L785.7 440.64 L787.7 440.86 L789.7 441.08 L791.7 441.29 L793.7 441.50 L795.7 441.70 L797.7 441.90 L799.7 442.10 L801.7 442.30 L803.7 442.49 L805.7 442.68 L807.7 442.86 L809.7 443.04 L811.7 443.22 L813.7 443.40 L815.7 443.57 L817.7 443.73 L819.7 443.90 L821.7 444.06 L823.7 444.22 L825.7 444.37 L827.7 444.52 L829.7 444.67 L831.7 444.82 L833.7 444.96 L835.7 445.10 L837.7 445.24 L839.7 445.37 L841.7 445.50 L843.7 445.63 L845.7 445.75 L847.7 445.88 L849.7 445.99 L851.7 446.11 L853.7 446.22 L855.7 446.34 L857.7 446.44 L859.7 446.55 L861.7 446.65 L863.7 446.75 L865.7 446.85 L867.7 446.94 L869.7 447.04 L871.7 447.13 L873.7 447.21 L875.7 447.30 L877.7 447.38 L879.7 447.46 L881.7 447.54 L883.7 447.61 L885.7 447.68 L887.7 447.76 L889.7 447.82 L891.7 447.89 L893.7 447.95 L895.7 448.02 L897.7 448.07 L899.7 448.13 L901.7 448.19 L903.7 448.24 L905.7 448.29 L907.7 448.34 L909.7 448.39 L911.7 448.43 L913.7 448.48 L915.7 448.52 L917.7 448.56 L919.7 448.59 L921.7 448.63 L923.7 448.66 L925.7 448.70 L927.7 448.73 L929.7 448.76 L931.7 448.78 L933.7 448.81 L935.7 448.83 L937.7 448.85 L939.7 448.88 L941.7 448.89 L943.7 448.91 L945.7 448.93 L947.7 448.94 L949.7 448.96 L951.7 448.97 L953.7 448.98 L955.7 448.99 L957.7 449.00 L959.7 449.00 L961.7 449.01 L963.7 449.01 L965.7 449.02 L967.7 449.02 L969.7 449.02 L971.7 449.02 L973.7 449.02 L975.7 449.01 L977.7 449.01 L979.7 449.01 L981.7 449.00 L983.7 448.99 L985.7 448.99 L987.7 448.98 L989.7 448.97 L991.7 448.96 L993.7 448.95 L995.7 448.94 L997.7 448.92 L999.7 448.91 L1001.7 448.90 L1003.7 448.88 L1005.7 448.87 L1007.7 448.85 L1009.7 448.84 L1011.7 448.82 L1013.7 448.80 L1015.7 448.78 L1017.7 448.77 L1019.7 448.75 L1021.7 448.73 L1023.7 448.71 L1025.7 448.69 L1027.7 448.67 L1029.7 448.65 L1031.7 448.63 L1033.7 448.61 L1035.7 448.59 L1037.7 448.57 L1039.7 448.54 L1041.7 448.52 L1043.7 448.50 L1045.7 448.48 L1047.7 448.46 L1049.7 448.44 L1051.7 448.42 L1053.7 448.39 L1055.7 448.37 L1057.7 448.35 L1059.7 448.33 L1061.7 448.31 L1063.0 448.29" stroke="#3535b8" stroke-width="2.1"/>
</g>
<text x="0" y="0" font-size="11" fill="#9cb2da" textLength="38" lengthAdjust="spacingAndGlyphs" transform="translate(218.5,111.5) rotate(-90)">2893.97</text>
<text x="0" y="0" font-size="11" fill="#f2f6fb" textLength="38" lengthAdjust="spacingAndGlyphs" transform="translate(394.5,111.5) rotate(-90)">3063.55</text>
<text x="0" y="0" font-size="11" fill="#f0fcfc" textLength="37" lengthAdjust="spacingAndGlyphs" transform="translate(734.5,111.5) rotate(-90)">3402.71</text>
<text x="0" y="0" font-size="11" fill="#9cb2da" textLength="38" lengthAdjust="spacingAndGlyphs" transform="translate(911,111.5) rotate(-90)">3572.29</text>
<path d="M56 379 H1007" stroke="#00ff00" stroke-width="2"/>
<path d="M56 461 H1019" stroke="#ff0000" stroke-width="2"/>
<circle cx="559.2" cy="411.5" r="4.3" fill="#00ffff" stroke="#000" stroke-width="1"/>
<rect x="544.5" y="51.5" width="29" height="13" fill="#eef2fa" stroke="#4a5a70"/>
<text x="559.00" y="62.50" font-size="11" fill="#222" text-anchor="middle" >0.5%</text>
<rect x="60.5" y="74.5" width="178" height="518" rx="6" ry="6" fill="#eef2fa" fill-opacity="0.7" stroke="#6a7a8e" stroke-width="1"/>
<rect x="68" y="82.0" width="4" height="12.5" fill="#ff3333"/>
<text x="72.50" y="92.50" font-size="11" fill="#444" >-463,472.80 Realized PnL</text>
<rect x="68" y="96.0" width="4" height="12.5" fill="#7b9fe6"/>
<text x="72.5" y="106.5" font-size="11" fill="#444">+200 <tspan fill="#3c3cf5">21Aug 2980 Put Δ</tspan></text>
<text x="230.07" y="106.51" font-size="11" fill="#3c3cf5" text-anchor="end" >-16.28</text>
<rect x="68" y="110.0" width="4" height="12.5" fill="#7b9fe6"/>
<text x="72.5" y="120.5" font-size="11" fill="#444">+250 <tspan fill="#3c3cf5">21Aug 3150 Put Δ</tspan></text>
<text x="230.07" y="120.52" font-size="11" fill="#3c3cf5" text-anchor="end" >-36.49</text>
<rect x="68" y="124.0" width="4" height="12.5" fill="#7b9fe6"/>
<text x="72.5" y="134.5" font-size="11" fill="#444">+180 <tspan fill="#3c3cf5">21Aug 2750 Put Δ</tspan></text>
<text x="230.07" y="134.53" font-size="11" fill="#3c3cf5" text-anchor="end" >-5.29</text>
<rect x="68" y="138.0" width="4" height="12.5" fill="#7b9fe6"/>
<text x="72.5" y="148.5" font-size="11" fill="#444">+340 <tspan fill="#3c3cf5">21Aug 3050 Put Δ</tspan></text>
<text x="230.07" y="148.54" font-size="11" fill="#3c3cf5" text-anchor="end" >-22.89</text>
<rect x="68" y="152.1" width="4" height="12.5" fill="#7b9fe6"/>
<text x="72.5" y="162.6" font-size="11" fill="#444">-400 <tspan fill="#f54040">21Aug 3060 Put Δ</tspan></text>
<text x="227.30" y="162.55" font-size="11" fill="#f54040" text-anchor="end" >-23.99</text>
<rect x="68" y="166.1" width="4" height="12.5" fill="#7b9fe6"/>
<text x="72.5" y="176.6" font-size="11" fill="#444">-500 <tspan fill="#f54040">21Aug 3025 Put Δ</tspan></text>
<text x="227.30" y="176.56" font-size="11" fill="#f54040" text-anchor="end" >-20.29</text>
<rect x="68" y="180.1" width="4" height="12.5" fill="#7b9fe6"/>
<text x="72.5" y="190.6" font-size="11" fill="#444">-155 <tspan fill="#f54040">21Aug 2900 Put Δ</tspan></text>
<text x="227.30" y="190.57" font-size="11" fill="#f54040" text-anchor="end" >-10.95</text>
<rect x="68" y="194.1" width="4" height="12.5" fill="#7b9fe6"/>
<text x="72.5" y="204.6" font-size="11" fill="#444">-388 <tspan fill="#f54040">21Aug 3100 Put Δ</tspan></text>
<text x="227.30" y="204.58" font-size="11" fill="#f54040" text-anchor="end" >-28.99</text>
<rect x="68" y="208.1" width="4" height="12.5" fill="#7b9fe6"/>
<text x="72.5" y="218.6" font-size="11" fill="#444">+226 <tspan fill="#3c3cf5">21Aug 2960 Put Δ</tspan></text>
<text x="230.07" y="218.59" font-size="11" fill="#3c3cf5" text-anchor="end" >-14.75</text>
<rect x="68" y="222.1" width="4" height="12.5" fill="#7b9fe6"/>
<text x="72.5" y="232.6" font-size="11" fill="#444">-227 <tspan fill="#f54040">21Aug 3040 Put Δ</tspan></text>
<text x="227.30" y="232.60" font-size="11" fill="#f54040" text-anchor="end" >-21.81</text>
<rect x="68" y="236.1" width="4" height="12.5" fill="#7b9fe6"/>
<text x="72.5" y="246.6" font-size="11" fill="#444">+50 <tspan fill="#3c3cf5">21Aug 2940 Put Δ</tspan></text>
<text x="223.94" y="246.61" font-size="11" fill="#3c3cf5" text-anchor="end" >-13.38</text>
<rect x="68" y="250.1" width="4" height="12.5" fill="#7b9fe6"/>
<text x="72.5" y="260.6" font-size="11" fill="#444">-150 <tspan fill="#f54040">21Aug 3080 Put Δ</tspan></text>
<text x="227.30" y="260.62" font-size="11" fill="#f54040" text-anchor="end" >-26.37</text>
<rect x="68" y="264.1" width="4" height="12.5" fill="#7b9fe6"/>
<text x="72.5" y="274.6" font-size="11" fill="#444">+49 <tspan fill="#3c3cf5">21Aug 2990 Put Δ</tspan></text>
<text x="223.94" y="274.63" font-size="11" fill="#3c3cf5" text-anchor="end" >-17.12</text>
<rect x="68" y="278.1" width="4" height="12.5" fill="#7b9fe6"/>
<text x="72.5" y="288.6" font-size="11" fill="#444">+89 <tspan fill="#3c3cf5">21Aug 3130 Put Δ</tspan></text>
<text x="223.94" y="288.64" font-size="11" fill="#3c3cf5" text-anchor="end" >-33.31</text>
<rect x="68" y="292.1" width="4" height="12.5" fill="#7b9fe6"/>
<text x="72.5" y="302.6" font-size="11" fill="#444">-243 <tspan fill="#f54040">21Aug 3070 Put Δ</tspan></text>
<text x="227.30" y="302.65" font-size="11" fill="#f54040" text-anchor="end" >-25.16</text>
<rect x="68" y="306.2" width="4" height="12.5" fill="#7b9fe6"/>
<text x="72.5" y="316.7" font-size="11" fill="#444">+165 <tspan fill="#3c3cf5">21Aug 3000 Put Δ</tspan></text>
<text x="230.07" y="316.66" font-size="11" fill="#3c3cf5" text-anchor="end" >-17.98</text>
<rect x="68" y="320.2" width="4" height="12.5" fill="#7b9fe6"/>
<text x="72.5" y="330.7" font-size="11" fill="#444">+100 <tspan fill="#3c3cf5">21Aug 3140 Put Δ</tspan></text>
<text x="230.07" y="330.67" font-size="11" fill="#3c3cf5" text-anchor="end" >-34.87</text>
<rect x="68" y="334.2" width="4" height="12.5" fill="#7b9fe6"/>
<text x="72.5" y="344.7" font-size="11" fill="#444">+110 <tspan fill="#3c3cf5">21Aug 3090 Put Δ</tspan></text>
<text x="229.25" y="344.68" font-size="11" fill="#3c3cf5" text-anchor="end" >-27.67</text>
<rect x="68" y="348.2" width="4" height="12.5" fill="#7b9fe6"/>
<text x="72.5" y="358.7" font-size="11" fill="#444">-232 <tspan fill="#f54040">21Aug 2950 Put Δ</tspan></text>
<text x="227.30" y="358.69" font-size="11" fill="#f54040" text-anchor="end" >-14.05</text>
<rect x="68" y="362.2" width="4" height="12.5" fill="#7b9fe6"/>
<text x="72.5" y="372.7" font-size="11" fill="#444">-270 <tspan fill="#f54040">21Aug 3030 Put Δ</tspan></text>
<text x="227.30" y="372.70" font-size="11" fill="#f54040" text-anchor="end" >-20.78</text>
<rect x="68" y="376.2" width="4" height="12.5" fill="#7b9fe6"/>
<text x="72.5" y="386.7" font-size="11" fill="#444">+165 <tspan fill="#3c3cf5">21Aug 2850 Put Δ</tspan></text>
<text x="230.07" y="386.71" font-size="11" fill="#3c3cf5" text-anchor="end" >-8.54</text>
<rect x="68" y="390.2" width="4" height="12.5" fill="#7b9fe6"/>
<text x="72.5" y="400.7" font-size="11" fill="#444">+322 <tspan fill="#3c3cf5">21Aug 3160 Put Δ</tspan></text>
<text x="230.07" y="400.72" font-size="11" fill="#3c3cf5" text-anchor="end" >-38.17</text>
<rect x="68" y="404.2" width="4" height="12.5" fill="#7b9fe6"/>
<text x="72.5" y="414.7" font-size="11" fill="#444">+222 <tspan fill="#3c3cf5">21Aug 3020 Put Δ</tspan></text>
<text x="230.07" y="414.73" font-size="11" fill="#3c3cf5" text-anchor="end" >-19.80</text>
<rect x="68" y="418.2" width="4" height="12.5" fill="#7b9fe6"/>
<text x="72.5" y="428.7" font-size="11" fill="#444">+65 <tspan fill="#3c3cf5">21Aug 2800 Put Δ</tspan></text>
<text x="223.94" y="428.74" font-size="11" fill="#3c3cf5" text-anchor="end" >-6.69</text>
<rect x="68" y="432.2" width="4" height="12.5" fill="#7b9fe6"/>
<text x="72.5" y="442.8" font-size="11" fill="#444">+50 <tspan fill="#3c3cf5">21Aug 2910 Put Δ</tspan></text>
<text x="223.94" y="442.75" font-size="11" fill="#3c3cf5" text-anchor="end" >-11.51</text>
<rect x="68" y="446.3" width="4" height="12.5" fill="#7b9fe6"/>
<text x="72.5" y="456.8" font-size="11" fill="#444">+225 <tspan fill="#3c3cf5">21Aug 3180 Put Δ</tspan></text>
<text x="230.07" y="456.76" font-size="11" fill="#3c3cf5" text-anchor="end" >-41.72</text>
<rect x="68" y="460.3" width="4" height="12.5" fill="#7b9fe6"/>
<text x="72.5" y="470.8" font-size="11" fill="#444">-250 <tspan fill="#f54040">21Aug 3120 Put Δ</tspan></text>
<text x="227.30" y="470.77" font-size="11" fill="#f54040" text-anchor="end" >-31.81</text>
<rect x="68" y="474.3" width="4" height="12.5" fill="#7b9fe6"/>
<text x="72.5" y="484.8" font-size="11" fill="#444">-30 <tspan fill="#f54040">21Aug 2825 Put Δ</tspan></text>
<text x="221.18" y="484.78" font-size="11" fill="#f54040" text-anchor="end" >-7.55</text>
<rect x="68" y="488.3" width="4" height="12.5" fill="#7b9fe6"/>
<text x="72.5" y="498.8" font-size="11" fill="#444">+400 <tspan fill="#3c3cf5">SPX Stock</tspan></text>
<rect x="68" y="502.3" width="4" height="12.5" fill="#7b9fe6"/>
<text x="72.5" y="512.8" font-size="11" fill="#444">+84 <tspan fill="#3c3cf5">18Sep 3325 Call Δ</tspan></text>
<text x="226.35" y="512.80" font-size="11" fill="#3c3cf5" text-anchor="end" >33.15</text>
<rect x="68" y="516.3" width="4" height="12.5" fill="#7b9fe6"/>
<text x="72.5" y="526.8" font-size="11" fill="#444">-84 <tspan fill="#f54040">21Aug 3325 Call Δ</tspan></text>
<text x="223.58" y="526.81" font-size="11" fill="#f54040" text-anchor="end" >24.14</text>
<rect x="68" y="530.3" width="4" height="12.5" fill="#7b9fe6"/>
<text x="72.5" y="540.8" font-size="11" fill="#444">+62 <tspan fill="#3c3cf5">21Aug 2875 Put Δ</tspan></text>
<text x="223.94" y="540.82" font-size="11" fill="#3c3cf5" text-anchor="end" >-9.67</text>
<rect x="68" y="544.3" width="4" height="12.5" fill="#7b9fe6"/>
<text x="72.5" y="554.8" font-size="11" fill="#444">+25 <tspan fill="#3c3cf5">18Sep 3300 Call Δ</tspan></text>
<text x="226.35" y="554.83" font-size="11" fill="#3c3cf5" text-anchor="end" >37.58</text>
<rect x="68" y="558.3" width="4" height="12.5" fill="#7b9fe6"/>
<text x="72.5" y="568.8" font-size="11" fill="#444">-25 <tspan fill="#f54040">21Aug 3300 Call Δ</tspan></text>
<text x="223.58" y="568.84" font-size="11" fill="#f54040" text-anchor="end" >30.19</text>
<rect x="68" y="572.3" width="4" height="12.5" fill="#7b9fe6"/>
<text x="72.5" y="582.8" font-size="11" fill="#444">-25 <tspan fill="#f54040">21Aug 2925 Put Δ</tspan></text>
<text x="221.18" y="582.85" font-size="11" fill="#f54040" text-anchor="end" >-12.40</text>
<rect x="60.5" y="682.5" width="115" height="70" rx="6" ry="6" fill="#eef2fa" fill-opacity="0.7" stroke="#6a7a8e" stroke-width="1"/>
<text x="68.00" y="701.00" font-size="11" fill="#5c5cd0" >21/08/2020 (0)</text>
<text x="68.00" y="715.00" font-size="11" fill="#a0a0a0" >12/08/2020 (9) T+16</text>
<text x="68.00" y="729.00" font-size="11" fill="#ff6060" >04/08/2020 (17) T+8</text>
<text x="68.00" y="743.00" font-size="11" fill="#80a8ee" >27/07/2020 (25) T+0</text>
<rect x="924.5" y="74.5" width="136" height="45" rx="6" ry="6" fill="#eef2fa" fill-opacity="0.85" stroke="#6a7a8e"/>
<text x="936.50" y="90.80" font-size="11" fill="#555" font-weight="bold" >Comments</text>
<text x="936.50" y="109.80" font-size="11" fill="#555" textLength="115" lengthAdjust="spacingAndGlyphs" >Trade Occurred Today</text>
<rect x="6.5" y="372.5" width="44" height="13" fill="#00ff00" stroke="#4a5a70"/>
<text x="48.50" y="384.00" font-size="11" fill="#111" text-anchor="end" >15%</text>
<rect x="6" y="404" width="45" height="14" fill="#008000"/>
<text x="48.50" y="415.50" font-size="11" fill="#fff" text-anchor="end" >5%</text>
<rect x="6.5" y="454.5" width="44" height="13" fill="#ff0000" stroke="#4a5a70"/>
<text x="48.50" y="466.00" font-size="11" fill="#111" text-anchor="end" >-10%</text>
<rect x="1006.5" y="372.5" width="110" height="26" fill="#00ff00" stroke="#4a5a70"/>
<text x="1009.00" y="384.00" font-size="11" fill="#111" textLength="62" lengthAdjust="spacingAndGlyphs" >Profit Target</text>
<text x="1009.00" y="396.50" font-size="11" fill="#111" >815,957</text>
<rect x="1070" y="404.5" width="45" height="13.5" fill="#008000"/>
<text x="1073.50" y="415.50" font-size="11" fill="#fff" >285,539</text>
<rect x="1018.5" y="454.5" width="100" height="26" fill="#ff0000" stroke="#4a5a70"/>
<text x="1021.00" y="466.00" font-size="11" fill="#222" textLength="48.3" lengthAdjust="spacingAndGlyphs" >Max Loss</text>
<text x="1021.00" y="478.50" font-size="11" fill="#222" >-543,971</text>
<rect x="4.5" y="778.5" width="1120" height="184" rx="5" ry="5" fill="#e8eef7" stroke="#56667a"/>
<rect x="56.0" y="806.5" width="28.5" height="10.0" fill="#f47878" stroke="#555" stroke-width="1"/>
<rect x="84.5" y="806.5" width="52.0" height="7.0" fill="#f47878" stroke="#555" stroke-width="1"/>
<rect x="136.5" y="806.5" width="52.0" height="5.0" fill="#f47878" stroke="#555" stroke-width="1"/>
<rect x="188.5" y="806.5" width="52.0" height="2.0" fill="#f47878" stroke="#555" stroke-width="1"/>
<path d="M240.5 806.5 H292.5" stroke="#555" stroke-width="1"/>
<rect x="292.5" y="805.5" width="52.0" height="1.0" fill="#5b7bf7" stroke="#555" stroke-width="1"/>
<rect x="344.5" y="804.5" width="52.0" height="2.0" fill="#5b7bf7" stroke="#555" stroke-width="1"/>
<rect x="396.5" y="804.5" width="52.0" height="2.0" fill="#5b7bf7" stroke="#555" stroke-width="1"/>
<rect x="448.5" y="804.5" width="52.0" height="2.0" fill="#5b7bf7" stroke="#555" stroke-width="1"/>
<rect x="500.5" y="804.5" width="52.0" height="2.0" fill="#5b7bf7" stroke="#555" stroke-width="1"/>
<rect x="552.5" y="805.5" width="52.0" height="1.0" fill="#5b7bf7" stroke="#555" stroke-width="1"/>
<rect x="604.5" y="805.5" width="52.0" height="1.0" fill="#5b7bf7" stroke="#555" stroke-width="1"/>
<path d="M656.5 806.5 H708.5" stroke="#555" stroke-width="1"/>
<path d="M708.5 806.5 H760.5" stroke="#555" stroke-width="1"/>
<path d="M760.5 806.5 H812.5" stroke="#555" stroke-width="1"/>
<rect x="812.5" y="806.5" width="52.0" height="1.0" fill="#f47878" stroke="#555" stroke-width="1"/>
<rect x="864.5" y="806.5" width="52.0" height="1.0" fill="#f47878" stroke="#555" stroke-width="1"/>
<rect x="916.5" y="806.5" width="52.0" height="1.0" fill="#f47878" stroke="#555" stroke-width="1"/>
<rect x="968.5" y="806.5" width="52.0" height="1.0" fill="#f47878" stroke="#555" stroke-width="1"/>
<rect x="1020.5" y="806.5" width="44.0" height="1.0" fill="#f47878" stroke="#555" stroke-width="1"/>
<rect x="56.0" y="838.5" width="28.5" height="10.0" fill="#5b7bf7" stroke="#555" stroke-width="1"/>
<rect x="84.5" y="838.5" width="52.0" height="10.0" fill="#5b7bf7" stroke="#555" stroke-width="1"/>
<rect x="136.5" y="839.5" width="52.0" height="9.0" fill="#5b7bf7" stroke="#555" stroke-width="1"/>
<rect x="188.5" y="840.5" width="52.0" height="8.0" fill="#5b7bf7" stroke="#555" stroke-width="1"/>
<rect x="240.5" y="842.5" width="52.0" height="6.0" fill="#5b7bf7" stroke="#555" stroke-width="1"/>
<rect x="292.5" y="844.5" width="52.0" height="4.0" fill="#5b7bf7" stroke="#555" stroke-width="1"/>
<rect x="344.5" y="846.5" width="52.0" height="2.0" fill="#5b7bf7" stroke="#555" stroke-width="1"/>
<path d="M396.5 848.5 H448.5" stroke="#555" stroke-width="1"/>
<rect x="448.5" y="848.5" width="52.0" height="1.0" fill="#f47878" stroke="#555" stroke-width="1"/>
<rect x="500.5" y="848.5" width="52.0" height="1.0" fill="#f47878" stroke="#555" stroke-width="1"/>
<rect x="552.5" y="848.5" width="52.0" height="1.0" fill="#f47878" stroke="#555" stroke-width="1"/>
<rect x="604.5" y="848.5" width="52.0" height="2.0" fill="#f47878" stroke="#555" stroke-width="1"/>
<rect x="656.5" y="848.5" width="52.0" height="1.0" fill="#f47878" stroke="#555" stroke-width="1"/>
<rect x="708.5" y="848.5" width="52.0" height="1.0" fill="#f47878" stroke="#555" stroke-width="1"/>
<rect x="760.5" y="848.5" width="52.0" height="1.0" fill="#f47878" stroke="#555" stroke-width="1"/>
<rect x="812.5" y="848.5" width="52.0" height="1.0" fill="#f47878" stroke="#555" stroke-width="1"/>
<rect x="864.5" y="848.5" width="52.0" height="1.0" fill="#f47878" stroke="#555" stroke-width="1"/>
<rect x="916.5" y="848.5" width="52.0" height="1.0" fill="#f47878" stroke="#555" stroke-width="1"/>
<path d="M968.5 848.5 H1020.5" stroke="#555" stroke-width="1"/>
<path d="M1020.5 848.5 H1064.5" stroke="#555" stroke-width="1"/>
<rect x="56.0" y="879.5" width="28.5" height="1.0" fill="#5b7bf7" stroke="#555" stroke-width="1"/>
<rect x="84.5" y="880.5" width="52.0" height="2.0" fill="#f47878" stroke="#555" stroke-width="1"/>
<rect x="136.5" y="880.5" width="52.0" height="6.0" fill="#f47878" stroke="#555" stroke-width="1"/>
<rect x="188.5" y="880.5" width="52.0" height="9.0" fill="#f47878" stroke="#555" stroke-width="1"/>
<rect x="240.5" y="880.5" width="52.0" height="10.0" fill="#f47878" stroke="#555" stroke-width="1"/>
<rect x="292.5" y="880.5" width="52.0" height="10.0" fill="#f47878" stroke="#555" stroke-width="1"/>
<rect x="344.5" y="880.5" width="52.0" height="8.0" fill="#f47878" stroke="#555" stroke-width="1"/>
<rect x="396.5" y="880.5" width="52.0" height="6.0" fill="#f47878" stroke="#555" stroke-width="1"/>
<rect x="448.5" y="880.5" width="52.0" height="3.0" fill="#f47878" stroke="#555" stroke-width="1"/>
<rect x="500.5" y="880.5" width="52.0" height="2.0" fill="#f47878" stroke="#555" stroke-width="1"/>
<rect x="552.5" y="880.5" width="52.0" height="1.0" fill="#f47878" stroke="#555" stroke-width="1"/>
<path d="M604.5 880.5 H656.5" stroke="#555" stroke-width="1"/>
<path d="M656.5 880.5 H708.5" stroke="#555" stroke-width="1"/>
<rect x="708.5" y="879.5" width="52.0" height="1.0" fill="#5b7bf7" stroke="#555" stroke-width="1"/>
<rect x="760.5" y="879.5" width="52.0" height="1.0" fill="#5b7bf7" stroke="#555" stroke-width="1"/>
<rect x="812.5" y="879.5" width="52.0" height="1.0" fill="#5b7bf7" stroke="#555" stroke-width="1"/>
<rect x="864.5" y="879.5" width="52.0" height="1.0" fill="#5b7bf7" stroke="#555" stroke-width="1"/>
<rect x="916.5" y="879.5" width="52.0" height="1.0" fill="#5b7bf7" stroke="#555" stroke-width="1"/>
<rect x="968.5" y="879.5" width="52.0" height="1.0" fill="#5b7bf7" stroke="#555" stroke-width="1"/>
<rect x="1020.5" y="879.5" width="44.0" height="1.0" fill="#5b7bf7" stroke="#555" stroke-width="1"/>
<rect x="56.0" y="912.5" width="28.5" height="9.0" fill="#f47878" stroke="#555" stroke-width="1"/>
<rect x="84.5" y="912.5" width="52.0" height="6.0" fill="#f47878" stroke="#555" stroke-width="1"/>
<rect x="136.5" y="912.5" width="52.0" height="1.0" fill="#f47878" stroke="#555" stroke-width="1"/>
<rect x="188.5" y="909.5" width="52.0" height="3.0" fill="#5b7bf7" stroke="#555" stroke-width="1"/>
<rect x="240.5" y="905.5" width="52.0" height="7.0" fill="#5b7bf7" stroke="#555" stroke-width="1"/>
<rect x="292.5" y="903.5" width="52.0" height="9.0" fill="#5b7bf7" stroke="#555" stroke-width="1"/>
<rect x="344.5" y="902.5" width="52.0" height="10.0" fill="#5b7bf7" stroke="#555" stroke-width="1"/>
<rect x="396.5" y="903.5" width="52.0" height="9.0" fill="#5b7bf7" stroke="#555" stroke-width="1"/>
<rect x="448.5" y="904.5" width="52.0" height="8.0" fill="#5b7bf7" stroke="#555" stroke-width="1"/>
<rect x="500.5" y="906.5" width="52.0" height="6.0" fill="#5b7bf7" stroke="#555" stroke-width="1"/>
<rect x="552.5" y="908.5" width="52.0" height="4.0" fill="#5b7bf7" stroke="#555" stroke-width="1"/>
<rect x="604.5" y="909.5" width="52.0" height="3.0" fill="#5b7bf7" stroke="#555" stroke-width="1"/>
<rect x="656.5" y="910.5" width="52.0" height="2.0" fill="#5b7bf7" stroke="#555" stroke-width="1"/>
<rect x="708.5" y="911.5" width="52.0" height="1.0" fill="#5b7bf7" stroke="#555" stroke-width="1"/>
<path d="M760.5 912.5 H812.5" stroke="#555" stroke-width="1"/>
<path d="M812.5 912.5 H864.5" stroke="#555" stroke-width="1"/>
<rect x="864.5" y="912.5" width="52.0" height="1.0" fill="#f47878" stroke="#555" stroke-width="1"/>
<rect x="916.5" y="912.5" width="52.0" height="1.0" fill="#f47878" stroke="#555" stroke-width="1"/>
<rect x="968.5" y="912.5" width="52.0" height="1.0" fill="#f47878" stroke="#555" stroke-width="1"/>
<rect x="1020.5" y="912.5" width="44.0" height="1.0" fill="#f47878" stroke="#555" stroke-width="1"/>
<rect x="56.0" y="939.5" width="28.5" height="5.0" fill="#5b7bf7" stroke="#555" stroke-width="1"/>
<rect x="84.5" y="943.5" width="52.0" height="1.0" fill="#5b7bf7" stroke="#555" stroke-width="1"/>
<rect x="136.5" y="944.5" width="52.0" height="3.0" fill="#f47878" stroke="#555" stroke-width="1"/>
<rect x="188.5" y="944.5" width="52.0" height="7.0" fill="#f47878" stroke="#555" stroke-width="1"/>
<rect x="240.5" y="944.5" width="52.0" height="9.0" fill="#f47878" stroke="#555" stroke-width="1"/>
<rect x="292.5" y="944.5" width="52.0" height="10.0" fill="#f47878" stroke="#555" stroke-width="1"/>
<rect x="344.5" y="944.5" width="52.0" height="9.0" fill="#f47878" stroke="#555" stroke-width="1"/>
<rect x="396.5" y="944.5" width="52.0" height="7.0" fill="#f47878" stroke="#555" stroke-width="1"/>
<rect x="448.5" y="944.5" width="52.0" height="4.0" fill="#f47878" stroke="#555" stroke-width="1"/>
<rect x="500.5" y="944.5" width="52.0" height="1.0" fill="#f47878" stroke="#555" stroke-width="1"/>
<rect x="552.5" y="943.5" width="52.0" height="1.0" fill="#5b7bf7" stroke="#555" stroke-width="1"/>
<rect x="604.5" y="942.5" width="52.0" height="2.0" fill="#5b7bf7" stroke="#555" stroke-width="1"/>
<rect x="656.5" y="941.5" width="52.0" height="3.0" fill="#5b7bf7" stroke="#555" stroke-width="1"/>
<rect x="708.5" y="940.5" width="52.0" height="4.0" fill="#5b7bf7" stroke="#555" stroke-width="1"/>
<rect x="760.5" y="940.5" width="52.0" height="4.0" fill="#5b7bf7" stroke="#555" stroke-width="1"/>
<rect x="812.5" y="940.5" width="52.0" height="4.0" fill="#5b7bf7" stroke="#555" stroke-width="1"/>
<rect x="864.5" y="940.5" width="52.0" height="4.0" fill="#5b7bf7" stroke="#555" stroke-width="1"/>
<rect x="916.5" y="941.5" width="52.0" height="3.0" fill="#5b7bf7" stroke="#555" stroke-width="1"/>
<rect x="968.5" y="941.5" width="52.0" height="3.0" fill="#5b7bf7" stroke="#555" stroke-width="1"/>
<rect x="1020.5" y="942.5" width="44.0" height="2.0" fill="#5b7bf7" stroke="#555" stroke-width="1"/>
<text x="30.50" y="811.00" font-size="11" fill="#666" text-anchor="middle" >PnL</text>
<text x="1092.00" y="811.00" font-size="11" fill="#666" text-anchor="middle" >PnL</text>
<text x="30.50" y="852.00" font-size="11" fill="#666" text-anchor="middle" >Delta</text>
<text x="1092.00" y="852.00" font-size="11" fill="#666" text-anchor="middle" >Delta</text>
<text x="30.50" y="885.00" font-size="11" fill="#666" text-anchor="middle" >Gamma</text>
<text x="1092.00" y="885.00" font-size="11" fill="#666" text-anchor="middle" >Gamma</text>
<text x="30.50" y="917.30" font-size="11" fill="#666" text-anchor="middle" >Theta</text>
<text x="1092.00" y="917.30" font-size="11" fill="#666" text-anchor="middle" >Theta</text>
<text x="30.50" y="948.60" font-size="11" fill="#666" text-anchor="middle" >Vega</text>
<text x="1092.00" y="948.60" font-size="11" fill="#666" text-anchor="middle" >Vega</text>
<text x="58.50" y="794.70" font-size="11" fill="#f55a5a" text-anchor="middle" >-41%</text>
<text x="58.50" y="805.50" font-size="11" fill="#f55a5a" text-anchor="middle" >-2224391</text>
<text x="58.50" y="858.50" font-size="11" fill="#5a5af5" text-anchor="middle" >12444.40</text>
<text x="58.50" y="890.50" font-size="11" fill="#5a5af5" text-anchor="middle" >7.16</text>
<text x="58.50" y="911.50" font-size="11" fill="#f55a5a" text-anchor="middle" >-37685.35</text>
<text x="58.50" y="954.50" font-size="11" fill="#5a5af5" text-anchor="middle" >36236.29</text>
<text x="110.50" y="794.70" font-size="11" fill="#f55a5a" text-anchor="middle" >-29%</text>
<text x="110.50" y="805.50" font-size="11" fill="#f55a5a" text-anchor="middle" >-1600850</text>
<text x="110.50" y="858.50" font-size="11" fill="#5a5af5" text-anchor="middle" >12339.96</text>
<text x="110.50" y="879.50" font-size="11" fill="#f55a5a" text-anchor="middle" >-11.65</text>
<text x="110.50" y="911.50" font-size="11" fill="#f55a5a" text-anchor="middle" >-22896.72</text>
<text x="110.50" y="954.50" font-size="11" fill="#5a5af5" text-anchor="middle" >9490.50</text>
<text x="162.50" y="794.70" font-size="11" fill="#f55a5a" text-anchor="middle" >-19%</text>
<text x="162.50" y="805.50" font-size="11" fill="#f55a5a" text-anchor="middle" >-1006382</text>
<text x="162.50" y="858.50" font-size="11" fill="#5a5af5" text-anchor="middle" >11281.39</text>
<text x="162.50" y="879.50" font-size="11" fill="#f55a5a" text-anchor="middle" >-30.32</text>
<text x="162.50" y="911.50" font-size="11" fill="#f55a5a" text-anchor="middle" >-4720.25</text>
<text x="162.50" y="943.50" font-size="11" fill="#f55a5a" text-anchor="middle" >-20790.81</text>
<text x="214.50" y="794.70" font-size="11" fill="#f55a5a" text-anchor="middle" >-9%</text>
<text x="214.50" y="805.50" font-size="11" fill="#f55a5a" text-anchor="middle" >-486864</text>
<text x="214.50" y="858.50" font-size="11" fill="#5a5af5" text-anchor="middle" >9379.84</text>
<text x="214.50" y="879.50" font-size="11" fill="#f55a5a" text-anchor="middle" >-44.71</text>
<text x="214.50" y="922.50" font-size="11" fill="#5a5af5" text-anchor="middle" >13605.91</text>
<text x="214.50" y="943.50" font-size="11" fill="#f55a5a" text-anchor="middle" >-48285.56</text>
<text x="266.50" y="794.70" font-size="11" fill="#f55a5a" text-anchor="middle" >-1%</text>
<text x="266.50" y="805.50" font-size="11" fill="#f55a5a" text-anchor="middle" >-77534</text>
<text x="266.50" y="858.50" font-size="11" fill="#5a5af5" text-anchor="middle" >6936.58</text>
<text x="266.50" y="879.50" font-size="11" fill="#f55a5a" text-anchor="middle" >-51.60</text>
<text x="266.50" y="922.50" font-size="11" fill="#5a5af5" text-anchor="middle" >28649.65</text>
<text x="266.50" y="943.50" font-size="11" fill="#f55a5a" text-anchor="middle" >-66791.75</text>
<text x="318.50" y="816.60" font-size="11" fill="#5a5af5" text-anchor="middle" >204635</text>
<text x="318.50" y="826.50" font-size="11" fill="#5a5af5" text-anchor="middle" >4%</text>
<text x="318.50" y="858.50" font-size="11" fill="#5a5af5" text-anchor="middle" >4363.05</text>
<text x="318.50" y="879.50" font-size="11" fill="#f55a5a" text-anchor="middle" >-49.97</text>
<text x="318.50" y="922.50" font-size="11" fill="#5a5af5" text-anchor="middle" >37901.04</text>
<text x="318.50" y="943.50" font-size="11" fill="#f55a5a" text-anchor="middle" >-72450.31</text>
<text x="370.50" y="816.60" font-size="11" fill="#5a5af5" text-anchor="middle" >363327</text>
<text x="370.50" y="826.50" font-size="11" fill="#5a5af5" text-anchor="middle" >7%</text>
<text x="370.50" y="858.50" font-size="11" fill="#5a5af5" text-anchor="middle" >2056.24</text>
<text x="370.50" y="879.50" font-size="11" fill="#f55a5a" text-anchor="middle" >-41.39</text>
<text x="370.50" y="922.50" font-size="11" fill="#5a5af5" text-anchor="middle" >40562.44</text>
<text x="370.50" y="943.50" font-size="11" fill="#f55a5a" text-anchor="middle" >-65171.69</text>
<text x="422.50" y="816.60" font-size="11" fill="#5a5af5" text-anchor="middle" >419236</text>
<text x="422.50" y="826.50" font-size="11" fill="#5a5af5" text-anchor="middle" >8%</text>
<text x="422.50" y="858.50" font-size="11" fill="#5a5af5" text-anchor="middle" >281.94</text>
<text x="422.50" y="879.50" font-size="11" fill="#f55a5a" text-anchor="middle" >-29.33</text>
<text x="422.50" y="922.50" font-size="11" fill="#5a5af5" text-anchor="middle" >37630.20</text>
<text x="422.50" y="943.50" font-size="11" fill="#f55a5a" text-anchor="middle" >-48486.29</text>
<text x="474.50" y="816.60" font-size="11" fill="#5a5af5" text-anchor="middle" >401779</text>
<text x="474.50" y="826.50" font-size="11" fill="#5a5af5" text-anchor="middle" >7%</text>
<text x="474.50" y="847.50" font-size="11" fill="#f55a5a" text-anchor="middle" >-882.04</text>
<text x="474.50" y="879.50" font-size="11" fill="#f55a5a" text-anchor="middle" >-17.55</text>
<text x="474.50" y="922.50" font-size="11" fill="#5a5af5" text-anchor="middle" >31249.96</text>
<text x="474.50" y="943.50" font-size="11" fill="#f55a5a" text-anchor="middle" >-27848.62</text>
<text x="526.50" y="816.60" font-size="11" fill="#5a5af5" text-anchor="middle" >339816</text>
<text x="526.50" y="826.50" font-size="11" fill="#5a5af5" text-anchor="middle" >6%</text>
<text x="526.50" y="847.50" font-size="11" fill="#f55a5a" text-anchor="middle" >-1520.73</text>
<text x="526.50" y="879.50" font-size="11" fill="#f55a5a" text-anchor="middle" >-8.53</text>
<text x="526.50" y="922.50" font-size="11" fill="#5a5af5" text-anchor="middle" >23721.96</text>
<text x="526.50" y="943.50" font-size="11" fill="#f55a5a" text-anchor="middle" >-8319.37</text>
<text x="578.50" y="816.60" font-size="11" fill="#5a5af5" text-anchor="middle" >255724</text>
<text x="578.50" y="826.50" font-size="11" fill="#5a5af5" text-anchor="middle" >5%</text>
<text x="578.50" y="847.50" font-size="11" fill="#f55a5a" text-anchor="middle" >-1798.23</text>
<text x="578.50" y="879.50" font-size="11" fill="#f55a5a" text-anchor="middle" >-3.05</text>
<text x="578.50" y="922.50" font-size="11" fill="#5a5af5" text-anchor="middle" >16593.97</text>
<text x="578.50" y="954.50" font-size="11" fill="#5a5af5" text-anchor="middle" >7108.90</text>
<text x="630.50" y="816.60" font-size="11" fill="#5a5af5" text-anchor="middle" >163454</text>
<text x="630.50" y="826.50" font-size="11" fill="#5a5af5" text-anchor="middle" >3%</text>
<text x="630.50" y="847.50" font-size="11" fill="#f55a5a" text-anchor="middle" >-1867.77</text>
<text x="630.50" y="879.50" font-size="11" fill="#f55a5a" text-anchor="middle" >-0.04</text>
<text x="630.50" y="922.50" font-size="11" fill="#5a5af5" text-anchor="middle" >10906.28</text>
<text x="630.50" y="954.50" font-size="11" fill="#5a5af5" text-anchor="middle" >17782.71</text>
<text x="682.50" y="816.60" font-size="11" fill="#5a5af5" text-anchor="middle" >70819</text>
<text x="682.50" y="826.50" font-size="11" fill="#5a5af5" text-anchor="middle" >1%</text>
<text x="682.50" y="847.50" font-size="11" fill="#f55a5a" text-anchor="middle" >-1821.94</text>
<text x="682.50" y="890.50" font-size="11" fill="#5a5af5" text-anchor="middle" >1.77</text>
<text x="682.50" y="922.50" font-size="11" fill="#5a5af5" text-anchor="middle" >6408.72</text>
<text x="682.50" y="954.50" font-size="11" fill="#5a5af5" text-anchor="middle" >24486.01</text>
<text x="734.50" y="794.70" font-size="11" fill="#f55a5a" text-anchor="middle" >0%</text>
<text x="734.50" y="805.50" font-size="11" fill="#f55a5a" text-anchor="middle" >-17425</text>
<text x="734.50" y="847.50" font-size="11" fill="#f55a5a" text-anchor="middle" >-1694.85</text>
<text x="734.50" y="890.50" font-size="11" fill="#5a5af5" text-anchor="middle" >3.29</text>
<text x="734.50" y="922.50" font-size="11" fill="#5a5af5" text-anchor="middle" >2998.71</text>
<text x="734.50" y="954.50" font-size="11" fill="#5a5af5" text-anchor="middle" >28267.57</text>
<text x="786.50" y="794.70" font-size="11" fill="#f55a5a" text-anchor="middle" >-2%</text>
<text x="786.50" y="805.50" font-size="11" fill="#f55a5a" text-anchor="middle" >-97441</text>
<text x="786.50" y="847.50" font-size="11" fill="#f55a5a" text-anchor="middle" >-1494.24</text>
<text x="786.50" y="890.50" font-size="11" fill="#5a5af5" text-anchor="middle" >4.69</text>
<text x="786.50" y="922.50" font-size="11" fill="#5a5af5" text-anchor="middle" >498.14</text>
<text x="786.50" y="954.50" font-size="11" fill="#5a5af5" text-anchor="middle" >29786.52</text>
<text x="838.50" y="794.70" font-size="11" fill="#f55a5a" text-anchor="middle" >-3%</text>
<text x="838.50" y="805.50" font-size="11" fill="#f55a5a" text-anchor="middle" >-165801</text>
<text x="838.50" y="847.50" font-size="11" fill="#f55a5a" text-anchor="middle" >-1231.70</text>
<text x="838.50" y="890.50" font-size="11" fill="#5a5af5" text-anchor="middle" >5.72</text>
<text x="838.50" y="911.50" font-size="11" fill="#f55a5a" text-anchor="middle" >-1185.18</text>
<text x="838.50" y="954.50" font-size="11" fill="#5a5af5" text-anchor="middle" >29330.59</text>
<text x="890.50" y="794.70" font-size="11" fill="#f55a5a" text-anchor="middle" >-4%</text>
<text x="890.50" y="805.50" font-size="11" fill="#f55a5a" text-anchor="middle" >-220007</text>
<text x="890.50" y="847.50" font-size="11" fill="#f55a5a" text-anchor="middle" >-933.41</text>
<text x="890.50" y="890.50" font-size="11" fill="#5a5af5" text-anchor="middle" >6.10</text>
<text x="890.50" y="911.50" font-size="11" fill="#f55a5a" text-anchor="middle" >-2128.78</text>
<text x="890.50" y="954.50" font-size="11" fill="#5a5af5" text-anchor="middle" >27145.37</text>
<text x="942.50" y="794.70" font-size="11" fill="#f55a5a" text-anchor="middle" >-5%</text>
<text x="942.50" y="805.50" font-size="11" fill="#f55a5a" text-anchor="middle" >-259115</text>
<text x="942.50" y="847.50" font-size="11" fill="#f55a5a" text-anchor="middle" >-633.50</text>
<text x="942.50" y="890.50" font-size="11" fill="#5a5af5" text-anchor="middle" >5.80</text>
<text x="942.50" y="911.50" font-size="11" fill="#f55a5a" text-anchor="middle" >-2461.57</text>
<text x="942.50" y="954.50" font-size="11" fill="#5a5af5" text-anchor="middle" >23663.95</text>
<text x="994.50" y="794.70" font-size="11" fill="#f55a5a" text-anchor="middle" >-5%</text>
<text x="994.50" y="805.50" font-size="11" fill="#f55a5a" text-anchor="middle" >-283833</text>
<text x="994.50" y="847.50" font-size="11" fill="#f55a5a" text-anchor="middle" >-361.95</text>
<text x="994.50" y="890.50" font-size="11" fill="#5a5af5" text-anchor="middle" >5.00</text>
<text x="994.50" y="911.50" font-size="11" fill="#f55a5a" text-anchor="middle" >-2364.77</text>
<text x="994.50" y="954.50" font-size="11" fill="#5a5af5" text-anchor="middle" >19490.38</text>
<text x="1046.50" y="794.70" font-size="11" fill="#f55a5a" text-anchor="middle" >-5%</text>
<text x="1046.50" y="805.50" font-size="11" fill="#f55a5a" text-anchor="middle" >-296089</text>
<text x="1046.50" y="847.50" font-size="11" fill="#f55a5a" text-anchor="middle" >-136.86</text>
<text x="1046.50" y="890.50" font-size="11" fill="#5a5af5" text-anchor="middle" >3.98</text>
<text x="1046.50" y="911.50" font-size="11" fill="#f55a5a" text-anchor="middle" >-2028.14</text>
<text x="1046.50" y="954.50" font-size="11" fill="#5a5af5" text-anchor="middle" >15235.75</text>
<rect x="534.5" y="762.5" width="49" height="200" rx="6" ry="6" fill="#e8eef7" fill-opacity="0.88" stroke="#4a5a70"/>
<path d="M535 778.5 H583" stroke="#c8ccd4"/>
<text x="559.00" y="773.60" font-size="11" fill="#111" text-anchor="middle" >3233.13</text>
<text x="559.00" y="806.50" font-size="11" fill="#0000ee" text-anchor="middle" >285,539</text>
<text x="559.00" y="821.70" font-size="11" fill="#0000ee" text-anchor="middle" >5.2%</text>
<text x="559.00" y="854.00" font-size="11" fill="#ee0000" text-anchor="middle" >-1,734.47</text>
<text x="559.00" y="885.00" font-size="11" fill="#ee0000" text-anchor="middle" >-4.57</text>
<text x="559.00" y="917.30" font-size="11" fill="#0000ee" text-anchor="middle" >18,947.05</text>
<text x="559.00" y="949.70" font-size="11" fill="#0000ee" text-anchor="middle" >2,444.01</text>
<rect x="0" y="966.6" width="1110" height="1.4" fill="#1c6fbe"/>
</svg></body></html>
